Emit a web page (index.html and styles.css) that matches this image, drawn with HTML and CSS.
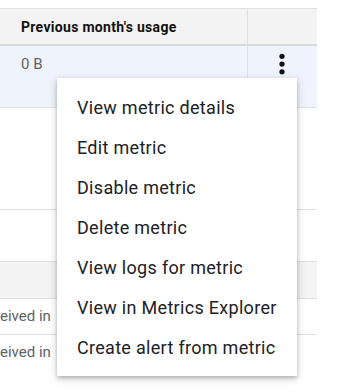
FILE: index.html
```html
<!DOCTYPE html>
<html lang="en">
  <head>
    <meta charset="UTF-8" />
    <meta name="viewport" content="width=device-width, initial-scale=1.0" />
    <title>Metrics</title>
    <link rel="stylesheet" href="styles.css">
  </head>
  <body>
    <div class="tabel">
      <div class="raekke hoved">
        <div class="celle">Previous month's usage</div>
        <div class="celle"></div>
      </div>
      <div class="raekke valgt">
        <div class="celle">0 B</div>
        <div class="celle kebab">
          <svg width="30" height="30" viewBox="0 0 24 24">
            <circle cx="12" cy="5.8" r="2.1" />
            <circle cx="12" cy="12" r="2.1" />
            <circle cx="12" cy="18.2" r="2.1" />
          </svg>
        </div>
      </div>
      <div class="raekke hoej"></div>
      <div class="raekke mellem"></div>
      <div class="raekke gruppe"></div>
      <div class="raekke"><div class="celle tekst">eived in</div></div>
      <div class="raekke sidste"><div class="celle tekst">eived in</div></div>
    </div>

    <!-- menuen for den valgte metric -->
    <ul class="menu">
      <li>View metric details</li>
      <li>Edit metric</li>
      <li>Disable metric</li>
      <li>Delete metric</li>
      <li>View logs for metric</li>
      <li>View in Metrics Explorer</li>
      <li>Create alert from metric</li>
    </ul>
  </body>
</html>
```

FILE: styles.css
```css
* {
  margin: 0px;
  padding: 0px;
  box-sizing: border-box;
}

html,
body {
  min-height: 392px;
}

body {
  background-color: white;
  font-family: Roboto, "Liberation Sans", sans-serif;
  position: relative;
}

/* Tabellen */
.tabel {
  width: 317px;
  margin-top: 8px;
  border-top: 1px solid #e0e0e0;
}

.raekke {
  display: grid;
  grid-template-columns: 248px 69px;
  border-bottom: 1px solid #e0e0e0;
  height: 36px;
}

.hoved {
  background-color: #f3f3f3;
  height: 37px;
  border-bottom: 2px solid #dadada;
  font-size: 14px;
  font-weight: 700;
  letter-spacing: 0.3px;
  color: #111;
  align-items: center;
}
.hoved .celle {
  height: 100%;
  display: flex;
  align-items: center;
  padding-left: 21px;
}
.hoved .celle:first-child,
.valgt .celle:first-child {
  border-right: 1px solid #e0e0e0;
}

.valgt {
  background-color: #eef3fd;
  height: 62px;
}
.valgt .celle {
  padding-top: 3px;
  height: 100%;
  font-size: 15px;
  color: #5f6368;
}
.valgt .celle:first-child {
  padding-left: 21px;
  line-height: 30px;
}
.kebab {
  display: flex;
  justify-content: center;
}
.kebab svg {
  fill: #111;
  margin-left: -2px;
}

.hoej {
  height: 102px;
}
.mellem {
  height: 52px;
}
.gruppe {
  background-color: #f3f3f3;
  height: 37px;
}
.sidste {
  border-bottom: none;
}

.tekst {
  font-size: 15px;
  color: #5f6368;
  line-height: 35px;
}

/* Menuen ligger oven over tabellen */
.menu {
  position: absolute;
  left: 57px;
  top: 78px;
  width: 240px;
  list-style-type: none;
  background-color: white;
  padding: 10px 0 8px 0;
  box-shadow: 0 2px 4px rgba(0, 0, 0, 0.25), 0 3px 10px rgba(0, 0, 0, 0.12);
}
.menu li {
  height: 40px;
  line-height: 40px;
  padding-left: 20px;
  font-size: 18px;
  letter-spacing: 0.3px;
  color: #202124;
  white-space: nowrap;
}
```
